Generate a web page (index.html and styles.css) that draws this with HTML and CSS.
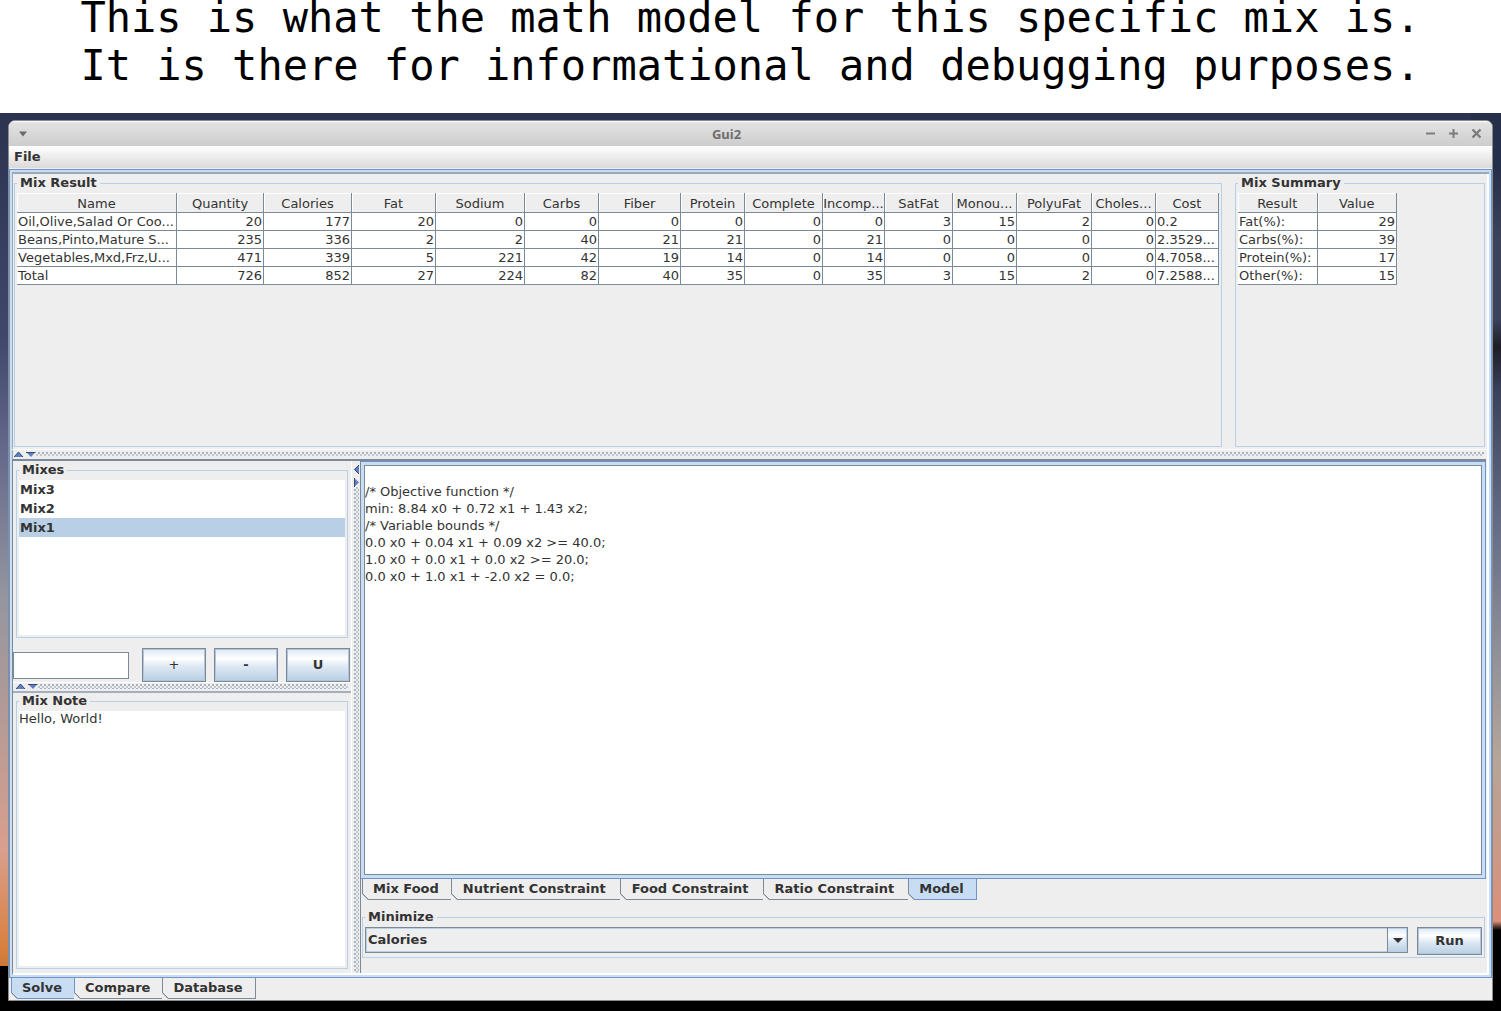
FILE: index.html
```html
<!DOCTYPE html>
<html lang="en">
<head>
<meta charset="utf-8">
<meta name="viewport" content="width=device-width, initial-scale=1">
<title>Gui2</title>
<link rel="stylesheet" href="styles.css">
</head>
<body>
<h1 class="caption">This is what the math model for this specific mix is.<br>It is there for informational and debugging purposes.</h1>
<div class="desktop">
  <main class="window">
    <header class="titlebar">
      <button class="title-button" aria-label="Window menu"><svg width="10" height="6" viewBox="0 0 10 6"><path d="M1 0.500h8L5 5.500z" fill="#6b6b6b"/></svg></button>
      <span class="title">Gui2</span>
      <button class="title-button" aria-label="Minimize window"><svg width="11" height="11" viewBox="0 0 11 11"><path d="M1 5.500h9" stroke="#7d7d7d" stroke-width="2"/></svg></button>
      <button class="title-button" aria-label="Maximize window"><svg width="11" height="11" viewBox="0 0 11 11"><path d="M1 5.500h9M5.500 1v9" stroke="#7d7d7d" stroke-width="2"/></svg></button>
      <button class="title-button" aria-label="Close window"><svg width="11" height="11" viewBox="0 0 11 11"><path d="M1.500 1.500l8 8M9.500 1.500l-8 8" stroke="#7d7d7d" stroke-width="2.400"/></svg></button>
    </header>
    <nav class="menubar"><button class="menu">File</button></nav>

    <div class="workspace">
      <section class="results">
        <fieldset class="group result-group">
          <legend>Mix Result</legend>
          <table class="grid">
            <colgroup><col class="c160"><col class="c87"><col class="c88"><col class="c84"><col class="c89"><col class="c74"><col class="c82"><col class="c64"><col class="c78"><col class="c62"><col class="c68"><col class="c64"><col class="c75"><col class="c64"><col class="c63"></colgroup>
            <thead><tr><th>Name</th><th>Quantity</th><th>Calories</th><th>Fat</th><th>Sodium</th><th>Carbs</th><th>Fiber</th><th>Protein</th><th>Complete</th><th>Incomp...</th><th>SatFat</th><th>Monou...</th><th>PolyuFat</th><th>Choles...</th><th>Cost</th></tr></thead>
            <tbody>
              <tr><td class="text">Oil,Olive,Salad Or Coo...</td><td>20</td><td>177</td><td>20</td><td>0</td><td>0</td><td>0</td><td>0</td><td>0</td><td>0</td><td>3</td><td>15</td><td>2</td><td>0</td><td class="text">0.2</td></tr>
              <tr><td class="text">Beans,Pinto,Mature S...</td><td>235</td><td>336</td><td>2</td><td>2</td><td>40</td><td>21</td><td>21</td><td>0</td><td>21</td><td>0</td><td>0</td><td>0</td><td>0</td><td class="text">2.3529...</td></tr>
              <tr><td class="text">Vegetables,Mxd,Frz,U...</td><td>471</td><td>339</td><td>5</td><td>221</td><td>42</td><td>19</td><td>14</td><td>0</td><td>14</td><td>0</td><td>0</td><td>0</td><td>0</td><td class="text">4.7058...</td></tr>
              <tr><td class="text">Total</td><td>726</td><td>852</td><td>27</td><td>224</td><td>82</td><td>40</td><td>35</td><td>0</td><td>35</td><td>3</td><td>15</td><td>2</td><td>0</td><td class="text">7.2588...</td></tr>
            </tbody>
          </table>
        </fieldset>
        <fieldset class="group summary-group">
          <legend>Mix Summary</legend>
          <table class="grid summary">
            <thead><tr><th>Result</th><th>Value</th></tr></thead>
            <tbody>
              <tr><td class="text">Fat(%):</td><td>29</td></tr>
              <tr><td class="text">Carbs(%):</td><td>39</td></tr>
              <tr><td class="text">Protein(%):</td><td>17</td></tr>
              <tr><td class="text">Other(%):</td><td>15</td></tr>
            </tbody>
          </table>
        </fieldset>
      </section>

      <div class="divider across"><svg width="22" height="5" viewBox="0 0 22 5"><path d="M0 5l4.500-5L9 5z" fill="#5a7fc4"/><path d="M0 5l4.500-5L9 5" fill="none" stroke="#3c4a66"/><path d="M12 0h9.500L17 5z" fill="#5a7fc4"/><path d="M12 .5h9.500" stroke="#3c4a66"/></svg></div>

      <section class="lower">
        <div class="sidebar">
          <fieldset class="group mixes-group">
            <legend>Mixes</legend>
            <ul class="list" role="listbox" aria-label="Mixes">
              <li role="option">Mix3</li>
              <li role="option">Mix2</li>
              <li role="option" aria-selected="true" class="selected">Mix1</li>
            </ul>
          </fieldset>
          <div class="mix-actions">
            <input class="name-field" type="text" aria-label="Mix name">
            <button class="push add">+</button>
            <button class="push">-</button>
            <button class="push">U</button>
          </div>
          <div class="divider across inner"><svg width="22" height="5" viewBox="0 0 22 5"><path d="M0 5l4.500-5L9 5z" fill="#5a7fc4"/><path d="M0 5l4.500-5L9 5" fill="none" stroke="#3c4a66"/><path d="M12 0h9.500L17 5z" fill="#5a7fc4"/><path d="M12 .5h9.500" stroke="#3c4a66"/></svg></div>
          <fieldset class="group note-group">
            <legend>Mix Note</legend>
            <textarea class="note" aria-label="Mix note">Hello, World!</textarea>
          </fieldset>
        </div>

        <div class="divider upright"><svg width="5" height="22" viewBox="0 0 5 22"><path d="M5 0v9L0 4.500z" fill="#5a7fc4"/><path d="M5 0L.5 4.500 5 9" fill="none" stroke="#3c4a66"/><path d="M0 13v9l5-4.500z" fill="#5a7fc4"/><path d="M.5 13v9" stroke="#3c4a66"/></svg></div>

        <div class="detail">
          <div class="tab-body">
            <textarea class="model" aria-label="Model" readonly>

/* Objective function */
min: 8.84 x0 + 0.72 x1 + 1.43 x2;
/* Variable bounds */
0.0 x0 + 0.04 x1 + 0.09 x2 &gt;= 40.0;
1.0 x0 + 0.0 x1 + 0.0 x2 &gt;= 20.0;
0.0 x0 + 1.0 x1 + -2.0 x2 = 0.0;</textarea>
          </div>
          <div class="tabs detail-tabs" role="tablist">
            <button class="tab" role="tab">Mix Food</button>
            <button class="tab wide" role="tab">Nutrient Constraint</button>
            <button class="tab wide" role="tab">Food Constraint</button>
            <button class="tab wide" role="tab">Ratio Constraint</button>
            <button class="tab active" role="tab" aria-selected="true">Model</button>
          </div>
          <fieldset class="group minimize-group">
            <legend>Minimize</legend>
            <div class="minimize-row">
              <div class="combo">
                <select aria-label="Minimize"><option>Calories</option></select>
              </div>
              <button class="push run">Run</button>
            </div>
          </fieldset>
        </div>
      </section>
    </div>

    <div class="tabs window-tabs" role="tablist">
      <button class="tab active" role="tab" aria-selected="true">Solve</button>
      <button class="tab" role="tab">Compare</button>
      <button class="tab" role="tab">Database</button>
    </div>
  </main>
</div>
</body>
</html>
```
FILE: styles.css
```css
* { box-sizing: border-box; }

body {
  margin: 0;
  min-height: 100vh;
  display: flex;
  flex-direction: column;
  background: #fff;
  color: #333;
  font: 13px/16px "DejaVu Sans", sans-serif;
}

button, input, select, textarea { font: inherit; color: inherit; border-radius: 0; }
button { font-weight: bold; padding: 0; }

.caption {
  margin: 0;
  padding-bottom: 23px;
  height: 113px;
  font: 42px/48px "DejaVu Sans Mono", monospace;
  color: #000;
  text-align: center;
  display: flex;
  align-items: flex-end;
  justify-content: center;
}

/* Dusk wallpaper showing around the window */
.desktop {
  flex: 1;
  display: flex;
  padding: 7px 8px 10px;
  background:
    linear-gradient(#000, #000) bottom / 100% 10px no-repeat,
    linear-gradient(#2b3350, #40476a 25%, #666a8b 38%, #9496a0 54%, #b59b96 68%, #d99f8e 82%, #d9803f 93%, #c87838 95%, #000 95%) left / 20px 100% no-repeat,
    linear-gradient(#2b3350, #2b3350) top left / 98% 8px no-repeat,
    linear-gradient(#262f49, #262f49 6%, #3a425c 14%, #3a425c 23%, #1c1d25 26%, #3a425c 31%, #4a5068 36%, #626a85 45%, #8f9199 60%, #b5a59a 72%, #dc9078 90%, #000 91%);
}

.window {
  flex: 1;
  min-width: 0;
  display: flex;
  flex-direction: column;
  background: #eee;
  border: 1px solid #8c8c8c;
  border-radius: 7px 7px 0 0;
  overflow: hidden;
}

.titlebar {
  display: flex;
  align-items: center;
  height: 25px;
  padding: 0 10px 0 8px;
  background: linear-gradient(#fff 0, #e2e2e2 2px, #cdcdcd);
}
.title {
  flex: 1;
  text-align: center;
  font-family: "Noto Sans", sans-serif;
  font-weight: bold;
  color: #6e6e6e;
}
.title-button {
  display: flex;
  justify-content: center;
  width: 12px;
  border: 0;
  background: none;
}
.title-button + .title-button { margin-left: 11px; }

.menubar {
  display: flex;
  height: 23px;
  padding: 0 5px;
  background: linear-gradient(#fff, #dadada);
  border-bottom: 1px solid #eee;
}
.menu { border: 0; background: none; }

.workspace {
  flex: 1;
  display: flex;
  flex-direction: column;
  border: 1px solid #6f93cb;
  box-shadow: inset 0 0 0 2px #c8ddf2, inset 3px 4px 0 #9aa9bc, inset -4px -4px 0 #fff;
  padding: 5px 5px 4px 2px;
}

.group {
  min-width: 0;
  margin: 0;
  padding: 2px;
  border: 1px solid #b8cfe5;
}
.group legend { padding: 0 3px; font-weight: bold; }

.results { display: flex; gap: 13px; height: 274px; padding: 0 1px 2px 2px; }
.result-group { flex: 1; }
.summary-group { width: 250px; }

.grid {
  width: 100%;
  table-layout: fixed;
  border-collapse: separate;
  border-spacing: 0;
}
.summary { width: 159px; }
.grid th, .grid td {
  padding: 0 1px 0 0;
  border: solid #7a8a99;
  border-width: 0 1px 1px 0;
  white-space: nowrap;
  overflow: hidden;
  text-align: right;
}
.grid th {
  height: 20px;
  padding: 2px 0 0;
  font-weight: normal;
  text-align: center;
  background: #eee;
  box-shadow: inset 1px 1px 0 #fff;
}
.grid td { height: 18px; line-height: 17px; background: #fff; }
.grid .text { text-align: left; padding: 0 0 0 1px; }
.c160 { width: 160px; } .c87 { width: 87px; } .c88 { width: 88px; }
.c84 { width: 84px; } .c89 { width: 89px; } .c74 { width: 74px; }
.c82 { width: 82px; } .c64 { width: 64px; } .c78 { width: 78px; }
.c62 { width: 62px; } .c68 { width: 68px; } .c75 { width: 75px; }
.c63 { width: 63px; }

/* Split-pane dividers with a bumpy grip texture */
.divider {
  display: flex;
  background-color: #eee;
  background-image:
    radial-gradient(circle at 1px 1px, #a9b4c0 1px, transparent 1px),
    radial-gradient(circle at 3px 3px, #c0c7cf 1px, transparent 1px);
  background-size: 4px 4px;
  background-clip: content-box;
  background-origin: content-box;
}
.divider svg { background: #eee; }
.across { height: 12px; padding: 3px 2px; border-bottom: 2px solid #7a8a99; box-shadow: inset 0 1px 0 #fff; }
.inner { height: 11px; border-bottom-color: #a3afbb; padding: 2px 3px; }
.upright { width: 9px; padding: 4px 1px 0 2px; border-left: 1px solid #fff; }

.lower { flex: 1; display: flex; min-height: 0; }

.sidebar {
  width: 339px;
  display: flex;
  flex-direction: column;
  border-left: 1px solid #7a8a99;
}
.mixes-group { flex: 0 0 176px; margin: 1px 3px 0; }
.list {
  height: 100%;
  margin: 0;
  padding: 0;
  list-style: none;
  background: #fff;
  font-weight: bold;
}
.list li { height: 19px; line-height: 19px; padding-left: 1px; }
.list .selected { background: #b8cfe5; }

.mix-actions {
  display: flex;
  gap: 8px;
  align-items: center;
  padding: 10px 1px 0 0;
}
.name-field {
  width: 116px;
  height: 27px;
  margin-right: 5px;
  border: 1px solid #7a8a99;
  background: #fff;
}
.push {
  flex: 1;
  height: 34px;
  border: 1px solid #7a8a99;
  box-shadow: inset 0 0 0 1px #b4c4d4;
  background: linear-gradient(#dde8f3, #fff 30%, #dde8f3 55%, #b8cfe5);
}
.add { font-weight: normal; }

.note-group { flex: 1; display: flex; margin: 0 3px 4px; }
.note, .model {
  flex: 1;
  display: block;
  margin: 0;
  padding: 0;
  border: 0;
  resize: none;
  background: #fff;
  outline: none;
}

.detail { flex: 1; min-width: 0; display: flex; flex-direction: column; border-left: 1px solid #7a8a99; }
.tab-body {
  flex: 1;
  display: flex;
  padding: 3px;
  border: 1px solid #6f93cb;
  border-left: 0;
  background: #c8ddf2;
}
.model { border: 1px solid #7a8a99; line-height: 17px; }

.tabs { display: flex; }
.tab {
  position: relative;
  height: 21px;
  padding: 0 12px 0 10px;
  border: solid #7a8a99;
  border-width: 0 1px 1px 0;
  background: #eee;
}
.tab:first-child { border-left-width: 1px; }
.wide { padding: 0 14px 0 11px; }
/* Chamfered lower-left corner */
.tab::before {
  content: "";
  position: absolute;
  left: -1px;
  bottom: -1px;
  width: 7px;
  height: 7px;
  background: linear-gradient(to top right, #eee 42%, #7a8a99 44%, #7a8a99 54%, transparent 56%);
}
.tab.active { background: #c8ddf2; border-color: #6f93cb; }
.detail-tabs { padding-left: 1px; }
.window-tabs { padding: 0 0 1px 2px; }

.minimize-group { margin: 9px 1px 15px; }
.minimize-row { display: flex; gap: 9px; align-items: flex-start; }
.combo { position: relative; flex: 1; display: flex; }
.combo select {
  flex: 1;
  height: 26px;
  padding: 0 24px 0 2px;
  appearance: none;
  font-weight: bold;
  border: 1px solid #7a8a99;
  box-shadow: inset 0 0 0 1px #b8cfe5;
  background: linear-gradient(#dde8f3, #fff 30%, #dde8f3 55%, #b8cfe5) right / 20px 100% no-repeat #eee;
}
.combo::before {
  content: "";
  position: absolute;
  right: 20px;
  top: 0;
  height: 100%;
  border-left: 1px solid #7a8a99;
}
.combo::after {
  content: "";
  position: absolute;
  right: 5px;
  top: 11px;
  border: solid transparent;
  border-width: 5px 5px 0;
  border-top-color: #333;
}
.run { flex: 0 0 65px; height: 28px; }
```
